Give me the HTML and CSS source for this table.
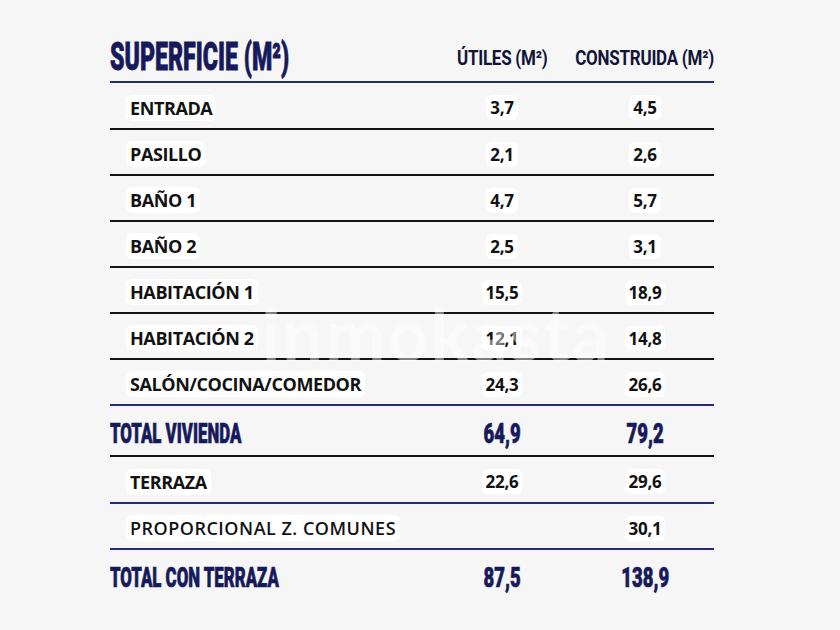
FILE: index.html
```html
<!DOCTYPE html>
<html lang="es">
<head>
<meta charset="utf-8">
<title>Superficie</title>
<link rel="stylesheet" href="styles.css">
</head>
<body>
<div class="page">
  <div class="table">
    <div class="row head">
      <div class="c-label"><span class="cond title">SUPERFICIE (M²)</span></div>
      <div class="c-val"><span class="cond colhead">ÚTILES (M²)</span></div>
      <div class="c-val"><span class="cond colhead">CONSTRUIDA (M²)</span></div>
    </div>
    <div class="row first"><div class="c-label"><span class="item">ENTRADA</span></div><div class="c-val"><span class="num">3,7</span></div><div class="c-val"><span class="num">4,5</span></div></div>
    <div class="row"><div class="c-label"><span class="item">PASILLO</span></div><div class="c-val"><span class="num">2,1</span></div><div class="c-val"><span class="num">2,6</span></div></div>
    <div class="row"><div class="c-label"><span class="item">BAÑO 1</span></div><div class="c-val"><span class="num">4,7</span></div><div class="c-val"><span class="num">5,7</span></div></div>
    <div class="row"><div class="c-label"><span class="item">BAÑO 2</span></div><div class="c-val"><span class="num">2,5</span></div><div class="c-val"><span class="num">3,1</span></div></div>
    <div class="row"><div class="c-label"><span class="item">HABITACIÓN 1</span></div><div class="c-val"><span class="num">15,5</span></div><div class="c-val"><span class="num">18,9</span></div></div>
    <div class="row"><div class="c-label"><span class="item">HABITACIÓN 2</span></div><div class="c-val"><span class="num">12,1</span></div><div class="c-val"><span class="num">14,8</span></div></div>
    <div class="row navy"><div class="c-label"><span class="item">SALÓN/COCINA/COMEDOR</span></div><div class="c-val"><span class="num">24,3</span></div><div class="c-val"><span class="num">26,6</span></div></div>
    <div class="row total"><div class="c-label"><span class="cond tlabel">TOTAL VIVIENDA</span></div><div class="c-val"><span class="cond tnum">64,9</span></div><div class="c-val"><span class="cond tnum">79,2</span></div></div>
    <div class="row navy first"><div class="c-label"><span class="item">TERRAZA</span></div><div class="c-val"><span class="num">22,6</span></div><div class="c-val"><span class="num">29,6</span></div></div>
    <div class="row navy"><div class="c-label"><span class="item semi">PROPORCIONAL Z. COMUNES</span></div><div class="c-val"></div><div class="c-val"><span class="num">30,1</span></div></div>
    <div class="row total last"><div class="c-label"><span class="cond tlabel">TOTAL CON TERRAZA</span></div><div class="c-val"><span class="cond tnum">87,5</span></div><div class="c-val"><span class="cond tnum">138,9</span></div></div>
  </div>
  <div class="watermark">inmokasta</div>
</div>
</body>
</html>
```

FILE: styles.css
```css
html, body {
  margin: 0;
  padding: 0;
  background: #f6f6f6;
}

.page {
  position: relative;
  width: 840px;
  height: 630px;
  overflow: hidden;
}

.table {
  margin-left: 110px;
  width: 604px;
  display: flex;
  flex-direction: column;
}

.row {
  box-sizing: border-box;
  display: grid;
  grid-template-columns: 318px 148px 138px;
  height: 46px;
  padding-top: 4px;
  align-items: center;
  border-bottom: 2px solid #141414;
}

.row.first { height: 47px; }
.row.navy { border-bottom-color: #262c74; }

.row.head {
  height: 83px;
  padding-top: 0;
  align-items: end;
  border-bottom-color: #262c74;
}

.row.total { height: 51px; padding-top: 7px; }
.row.last { border-bottom: none; padding-top: 5px; }

.c-label {
  display: flex;
  align-items: center;
}

.c-val {
  display: flex;
  justify-content: center;
}

.cond {
  display: inline-block;
  font-family: Roboto, "DejaVu Sans", sans-serif;
  font-weight: 900;
  color: #171a5a;
  white-space: nowrap;
}

.title {
  font-size: 38px;
  line-height: 38px;
  transform: scaleX(0.61);
  transform-origin: left center;
  margin-bottom: 5px;
  -webkit-text-stroke: 0.8px #171a5a;
}

.colhead {
  font-size: 20px;
  line-height: 20px;
  font-weight: 700;
  color: #111436;
  transform: scaleX(0.85);
  transform-origin: center;
  margin-bottom: 13px;
  letter-spacing: -0.3px;
}

.item {
  margin-left: 20px;
  font-family: "Open Sans", "Noto Sans", sans-serif;
  font-weight: 700;
  font-size: 18px;
  letter-spacing: -0.4px;
  color: #121212;
  background: #fff;
  border-radius: 6px;
  padding: 1px 4px;
  margin-right: -4px;
  position: relative;
  left: -4px;
}

.item.semi {
  font-weight: 600;
  letter-spacing: 0.5px;
}

.num {
  font-family: "Open Sans", "Noto Sans", sans-serif;
  font-weight: 700;
  font-size: 17px;
  letter-spacing: -0.3px;
  color: #121212;
  background: #fff;
  border-radius: 6px;
  padding: 1px 4px;
}

.tlabel {
  font-size: 28px;
  line-height: 28px;
  transform: scaleX(0.6);
  transform-origin: left center;
  -webkit-text-stroke: 0.7px #171a5a;
}

.tnum {
  font-size: 28px;
  line-height: 28px;
  transform: scaleX(0.66);
  transform-origin: center;
  -webkit-text-stroke: 0.7px #171a5a;
}

.watermark {
  position: absolute;
  left: 262px;
  top: 290px;
  font-family: Lato, "Open Sans", sans-serif;
  font-size: 72px;
  font-weight: 700;
  color: rgba(255, 255, 255, 0.45);
  letter-spacing: 2px;
  pointer-events: none;
}
```
